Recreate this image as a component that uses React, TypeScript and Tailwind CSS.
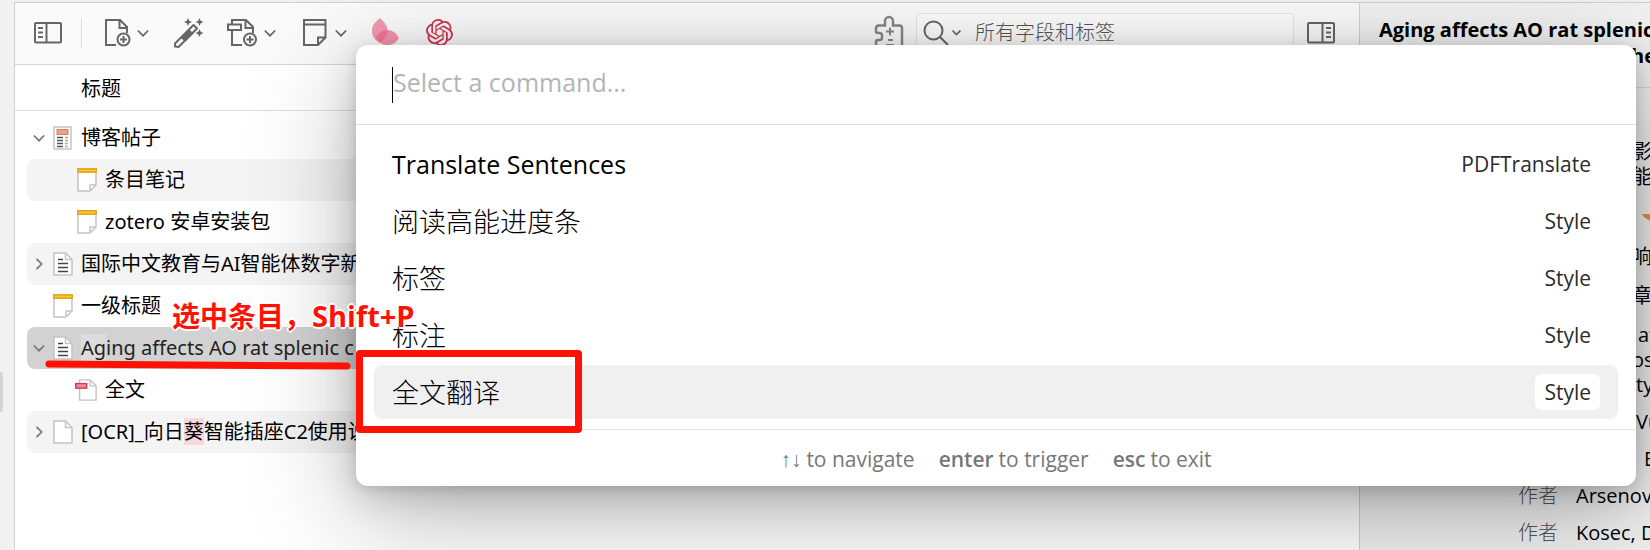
import type { ReactNode } from 'react'
import { SiOpenai } from 'react-icons/si'

const stroke = { fill: 'none', stroke: 'currentColor', strokeWidth: 2 } as const

function SidebarIcon({ flipped = false }: { flipped?: boolean }) {
  return (
    <svg className={flipped ? 'h-[22px] w-7 -scale-x-100' : 'h-[22px] w-7'} viewBox="0 0 28 22" {...stroke}>
      <rect x="1" y="1" width="26" height="19.500" rx="1" />
      <path d="M12.500 1v19.500M4 6h5M4 10.500h5M4 15h5" />
    </svg>
  )
}

function Chevron({ small = false }: { small?: boolean }) {
  return (
    <svg
      className={small ? 'h-[9px] w-[9px]' : 'h-3 w-3'}
      viewBox="0 0 12 12"
      fill="none"
      stroke="currentColor"
      strokeWidth={small ? 2.2 : 1.7}
    >
      <path d="M.8 3.500L6 8.700l5.200-5.200" />
    </svg>
  )
}

function NewItemIcon() {
  return (
    <svg className="h-7 w-[26px]" viewBox="0 0 26 28" {...stroke}>
      <path d="M11 26H1V1h14l7 7v6M14.500 1v8H22" />
      <circle cx="18.500" cy="20.500" r="6" />
      <path d="M18.500 17v7M15 20.500h7" />
    </svg>
  )
}

function WandIcon() {
  return (
    <svg className="h-[30px] w-[31px]" viewBox="0 0 31 30" {...stroke}>
      <path d="M2 25.500L20.500 7l3.500 3.500L5.500 29 2 28.500z" strokeLinejoin="round" />
      <path d="M9 19.500L16 12.500l3 3-7 7z" fill="currentColor" />
      <path
        d="M15 0l1.200 2.800L19 4l-2.800 1.200L15 8l-1.200-2.800L11 4l2.800-1.200zM26.500 0l1.200 2.800 2.800 1.200-2.800 1.200L26.500 8l-1.200-2.800L22.500 4l2.800-1.200zM26.500 11l1.200 2.800 2.800 1.200-2.800 1.200-1.200 2.800-1.200-2.800-2.800-1.200 2.800-1.200z"
        fill="currentColor"
        stroke="none"
      />
    </svg>
  )
}

function AddAttachmentIcon() {
  return (
    <svg className="h-7 w-8" viewBox="0 0 32 28" {...stroke}>
      <path d="M16 26H6V12M6 5V1h14l7 7v6M19.500 1v8H27" />
      <rect x="2" y="5.500" width="13" height="5.500" />
      <circle cx="24" cy="20.500" r="6" />
      <path d="M24 17v7M20.500 20.500h7" />
    </svg>
  )
}

function NewNoteIcon() {
  return (
    <svg className="h-7 w-6" viewBox="0 0 24 28" {...stroke}>
      <path d="M1 1h21.500v17.500L15 26H1zM1 5.500h21.500M15 26v-7.500h7.500" />
    </svg>
  )
}

function PetalsIcon() {
  return (
    <svg className="h-[30px] w-[29px]" viewBox="0 0 29 30">
      <path d="M9 0c6 5 9 11 7 16-1.500 4-4 7-7 9-5-3-8-6-8-12S4 4 9 0z" fill="#f2668d" fillOpacity=".65" />
      <path d="M5 20c2-5 6-8 11-8 6 0 9 3 12 8-3 5-7 7-12 7-5 0-9-3-11-7z" fill="#f2668d" fillOpacity=".7" />
    </svg>
  )
}

function PuzzleIcon() {
  return (
    <svg className="h-9 w-[30px]" viewBox="0 0 30 36" fill="none" stroke="currentColor" strokeWidth="2.500">
      <path d="M28 36V13q0-2.500-2.500-2.500H19V6a4 4 0 0 0-8 0v4.500H5q-3 0-3 3V16q0 2 2 2h1.500a2.500 2.500 0 0 1 2.500 2.500v2a2.500 2.500 0 0 1-2.500 2.500H4q-2 0-2 2V36" />
      <path d="M16 12.500v8M12 16.500h8M14 25h5M12 30h8" strokeWidth="2" />
    </svg>
  )
}

function SearchIcon() {
  return (
    <svg className="h-[26px] w-[26px]" viewBox="0 0 26 26" {...stroke}>
      <circle cx="10.500" cy="10.500" r="9" />
      <path d="M17 17l8 8" />
    </svg>
  )
}

function BlogIcon() {
  return (
    <svg className="h-6 w-5" viewBox="0 0 20 24">
      <rect x="1" y="1" width="17" height="22" fill="#fff" stroke="#c4c4c4" strokeWidth="1.500" />
      <rect x="4" y="3.500" width="11" height="5" fill="#eda287" stroke="#d57c61" />
      <path d="M4 11.500h6M4 14.500h6M4 17.500h6M4 20.500h6" stroke="#555" strokeWidth="1.500" />
      <path d="M12 11.500h3M12 14.500h3M12 17.500h3M12 20.500h3" stroke="#aaa" strokeWidth="1.500" />
    </svg>
  )
}

function NoteIcon() {
  return (
    <svg className="h-6 w-5" viewBox="0 0 20 24">
      <path d="M1 1h18v16l-6 6H1z" fill="#fff" stroke="#c4c4c4" strokeWidth="1.500" />
      <path d="M13 23v-6h6" fill="none" stroke="#c4c4c4" strokeWidth="1.500" />
      <path d="M0 0h20v5H0z" fill="#e5a91f" />
      <path d="M1.500 2.500h17" stroke="#f9c646" strokeWidth="1.500" />
    </svg>
  )
}

function PageIcon({ lines = false }: { lines?: boolean }) {
  return (
    <svg className="h-6 w-5" viewBox="0 0 20 24">
      <path d="M1 1h11.500L19 7.500V23H1z" fill="#fff" stroke="#c4c4c4" strokeWidth="1.500" />
      <path d="M12.500 1v6.500H19" fill="none" stroke="#c4c4c4" strokeWidth="1.500" />
      {lines && <path d="M5 7.500h5M5 11.500h10M5 15.500h10M5 19.500h10" stroke="#444" strokeWidth="1.500" />}
    </svg>
  )
}

function PdfIcon() {
  return (
    <svg className="h-6 w-6" viewBox="0 0 24 24">
      <path d="M5 1h11.500L23 7.500V23H5z" fill="#fff" stroke="#c4c4c4" strokeWidth="1.500" />
      <path d="M16.500 1v6.500H23" fill="none" stroke="#c4c4c4" strokeWidth="1.500" />
      <rect x=".8" y="5" width="12" height="5" fill="#f08a9a" stroke="#cf3a55" strokeWidth="1.500" />
    </svg>
  )
}

type Item = {
  icon: ReactNode
  title: ReactNode
  twisty?: 'open' | 'closed'
  child?: boolean
  tone?: 'striped' | 'selected'
}

const items: Item[] = [
  { icon: <BlogIcon />, title: '博客帖子', twisty: 'open' },
  { icon: <NoteIcon />, title: '条目笔记', child: true, tone: 'striped' },
  { icon: <NoteIcon />, title: 'zotero 安卓安装包', child: true },
  { icon: <PageIcon lines />, title: '国际中文教育与AI智能体数字新', twisty: 'closed', tone: 'striped' },
  { icon: <NoteIcon />, title: '一级标题' },
  {
    icon: <PageIcon lines />,
    title: (
      <>
        <span className="bg-[#dcdcdc]">Ag</span>ing affects AO rat splenic c
      </>
    ),
    twisty: 'open',
    tone: 'selected',
  },
  { icon: <PdfIcon />, title: '全文', child: true },
  {
    icon: <PageIcon />,
    title: (
      <>
        [OCR]_向日<mark className="bg-[#f9d5dd] text-inherit">葵</mark>智能插座C2使用说
      </>
    ),
    twisty: 'closed',
    tone: 'striped',
  },
]

const tones = {
  none: '',
  striped: 'bg-[#f4f4f4]',
  selected: 'bg-[#d2d2d2] text-[#222]',
}

function ItemRow({ icon, title, twisty, child, tone }: Item) {
  return (
    <li className={`flex h-[42px] items-center rounded-lg ${tones[tone ?? 'none']}`}>
      <span className={`flex shrink-0 justify-center text-[#777] ${child ? 'w-12' : 'w-6'}`}>
        {twisty && (
          <span className={twisty === 'closed' ? '-rotate-90' : ''}>
            <Chevron />
          </span>
        )}
      </span>
      <span className="mr-2 flex w-[22px] shrink-0 justify-end">{icon}</span>
      <span className="whitespace-nowrap">{title}</span>
    </li>
  )
}

const commands = [
  { name: 'Translate Sentences', group: 'PDFTranslate', latin: true },
  { name: '阅读高能进度条', group: 'Style' },
  { name: '标签', group: 'Style' },
  { name: '标注', group: 'Style' },
  { name: '全文翻译', group: 'Style', active: true },
]

function Field({ label, children, height }: { label?: string; children: ReactNode; height?: string }) {
  return (
    <div className={`flex items-center whitespace-nowrap leading-[25px] ${height ?? 'py-1.5'}`}>
      <dt className="mr-[18px] w-[198px] shrink-0 text-right font-light text-[#555]">{label}</dt>
      <dd>{children}</dd>
    </div>
  )
}

function Toolbar() {
  return (
    <div className="flex h-[62px] shrink-0 items-center border-b border-[#d4d4d4] bg-[#fafafa] pb-0.5 text-[#666]">
      <button aria-label="Toggle collections" className="ml-[19px]">
        <SidebarIcon />
      </button>
      <span className="mx-[19px] h-[30px] w-px bg-[#ddd]" />
      <button aria-label="New item" className="ml-1 flex items-center gap-1.5">
        <NewItemIcon />
        <Chevron />
      </button>
      <button aria-label="Add by identifier" className="ml-6">
        <WandIcon />
      </button>
      <button aria-label="Add attachment" className="ml-[22px] flex items-center gap-1.5">
        <AddAttachmentIcon />
        <Chevron />
      </button>
      <button aria-label="New note" className="ml-[27px] flex items-center gap-2">
        <NewNoteIcon />
        <Chevron />
      </button>
      <button aria-label="Style" className="ml-6">
        <PetalsIcon />
      </button>
      <button aria-label="GPT" className="ml-[26px] text-[#cf3550]">
        <SiOpenai size={27} />
      </button>
      <button aria-label="Plugins" className="mr-3 ml-auto text-[#888]">
        <PuzzleIcon />
      </button>
      <div className="flex h-10 w-[378px] items-center rounded border border-[#e6e6e6] bg-[#fcfcfc] pl-1.5">
        <SearchIcon />
        <span className="ml-[3px] shrink-0">
          <Chevron small />
        </span>
        <input
          aria-label="Search"
          placeholder="所有字段和标签"
          className="ml-3.5 min-w-0 flex-1 bg-transparent font-light outline-none placeholder:text-[#555]"
        />
      </div>
      <button aria-label="Toggle item pane" className="mr-6 ml-[13px]">
        <SidebarIcon flipped />
      </button>
    </div>
  )
}

function CommandPalette() {
  return (
    <div
      role="dialog"
      aria-label="Command palette"
      className="absolute top-[45px] right-3.5 left-[356px] rounded-xl bg-white shadow-[0_3px_11px_rgba(0,0,0,0.1),0_9px_37px_rgba(0,0,0,0.17),0_30px_110px_rgba(0,0,0,0.28)]"
    >
      <div className="flex h-20 items-center border-b border-[#e2e2e2] px-9">
        <span className="h-9 w-px shrink-0 bg-black" />
        <input
          aria-label="Command"
          placeholder="Select a command..."
          className="min-w-0 flex-1 pb-1 text-[25px] outline-none placeholder:text-[#b4b4b4]"
        />
      </div>
      <ul className="flex flex-col gap-[3px] px-[18px] pt-3 pb-2.5">
        {commands.map(({ name, group, latin, active }) => (
          <li key={name}>
            <button
              className={`flex h-[54px] w-full items-center justify-between rounded-lg px-[18px] ${active ? 'bg-[#f0f0f0]' : ''}`}
            >
              <span className={latin ? 'text-[25px]' : 'pt-0.5 text-[27px] font-light'}>{name}</span>
              <span
                className={`flex h-9 items-center rounded-md px-[9px] pt-0.5 text-[21px] text-[#2c2c2c] ${active ? 'bg-white' : ''}`}
              >
                {group}
              </span>
            </button>
          </li>
        ))}
      </ul>
      <div className="flex h-[57px] items-center justify-center gap-6 border-t border-[#e2e2e2] pt-1 text-[21px] text-[#777]">
        <span className="flex items-center gap-[5px]">
          <kbd className="font-['Liberation_Sans',sans-serif]">↑↓</kbd>
          to navigate
        </span>
        <span className="flex items-center gap-[5px]">
          <kbd className="font-semibold [font-family:inherit]">enter</kbd>
          to trigger
        </span>
        <span className="flex items-center gap-[5px]">
          <kbd className="font-semibold [font-family:inherit]">esc</kbd>
          to exit
        </span>
      </div>
    </div>
  )
}

export default function App() {
  return (
    <div className="relative flex h-screen min-h-[550px] flex-col overflow-hidden bg-[#f1f1f1] font-['Open_Sans','Noto_Sans_CJK_SC',sans-serif] text-xl text-black">
      <div className="h-0.5 shrink-0" />
      <div className="flex min-h-0 flex-1">
        <aside className="flex w-3.5 shrink-0 items-start pt-[370px]">
          <span className="h-10 w-[3px] rounded-r bg-[#d4d4d4]" />
        </aside>
        <main className="flex min-w-0 flex-1 flex-col border-t border-l border-[#d0d0d0] bg-white">
          <Toolbar />
          <div className="flex h-[46px] shrink-0 items-center border-b border-[#dedede] pt-0.5 pl-[66px]">标题</div>
          <ul className="flex flex-col pt-1.5 pl-3 font-['Noto_Sans','Noto_Sans_CJK_SC',sans-serif]">
            {items.map((item, i) => (
              <ItemRow key={i} {...item} />
            ))}
          </ul>
        </main>
        <aside className="w-[291px] shrink-0 overflow-hidden border-t border-l border-[#d0d0d0]">
          <header className="h-[85px] border-b border-[#d8d8d8] pt-3.5 pl-[19px] leading-[26px] font-bold whitespace-nowrap">
            <p>Aging affects AO rat splenic</p>
            <p className="pl-[252px]">he</p>
          </header>
          <dl className="pt-[45px]">
            <Field>
              <p className="pl-[56px]">影</p>
              <p className="pl-[56px]">能</p>
            </Field>
            <Field height="h-[43px]">
              <svg className="ml-[66px] h-2 w-6" viewBox="0 0 24 8">
                <path d="M0 1h24v7H10Q2 6 0 1z" fill="#dd9650" />
              </svg>
            </Field>
            <Field>
              <p className="pl-[56px]">响</p>
            </Field>
            <Field height="h-[41px]">
              <p className="pl-[56px]">章</p>
            </Field>
            <Field>
              <p className="pl-[62px]">at</p>
              <p className="pl-[56px]">os</p>
              <p className="pl-[60px]">ty</p>
            </Field>
            <Field>
              <p className="pl-[60px]">Vu</p>
            </Field>
            <Field>
              <p className="pl-[68px]">E</p>
            </Field>
            <Field label="作者">Arsenov</Field>
            <Field label="作者">Kosec, D</Field>
          </dl>
        </aside>
      </div>

      <CommandPalette />

      <p className="absolute top-[296px] left-[172px] text-[28px] leading-10 font-bold whitespace-nowrap text-[#ff1205] [text-shadow:-2px_0_#fff,2px_0_#fff,0_-2px_#fff,0_2px_#fff,1px_1px_#fff,-1px_-1px_#fff]">
        选中条目，<span className="text-[29px]">Shift+P</span>
      </p>
      <svg className="absolute top-[360px] left-[44px] h-3 w-[310px]" viewBox="0 0 310 12">
        <path d="M5 4L303 6" stroke="#ff1205" strokeWidth="7" strokeLinecap="round" />
      </svg>
      <div className="absolute top-[350px] left-[356px] h-[83px] w-[226px] rounded border-[7px] border-[#ff1205]" />
    </div>
  )
}
